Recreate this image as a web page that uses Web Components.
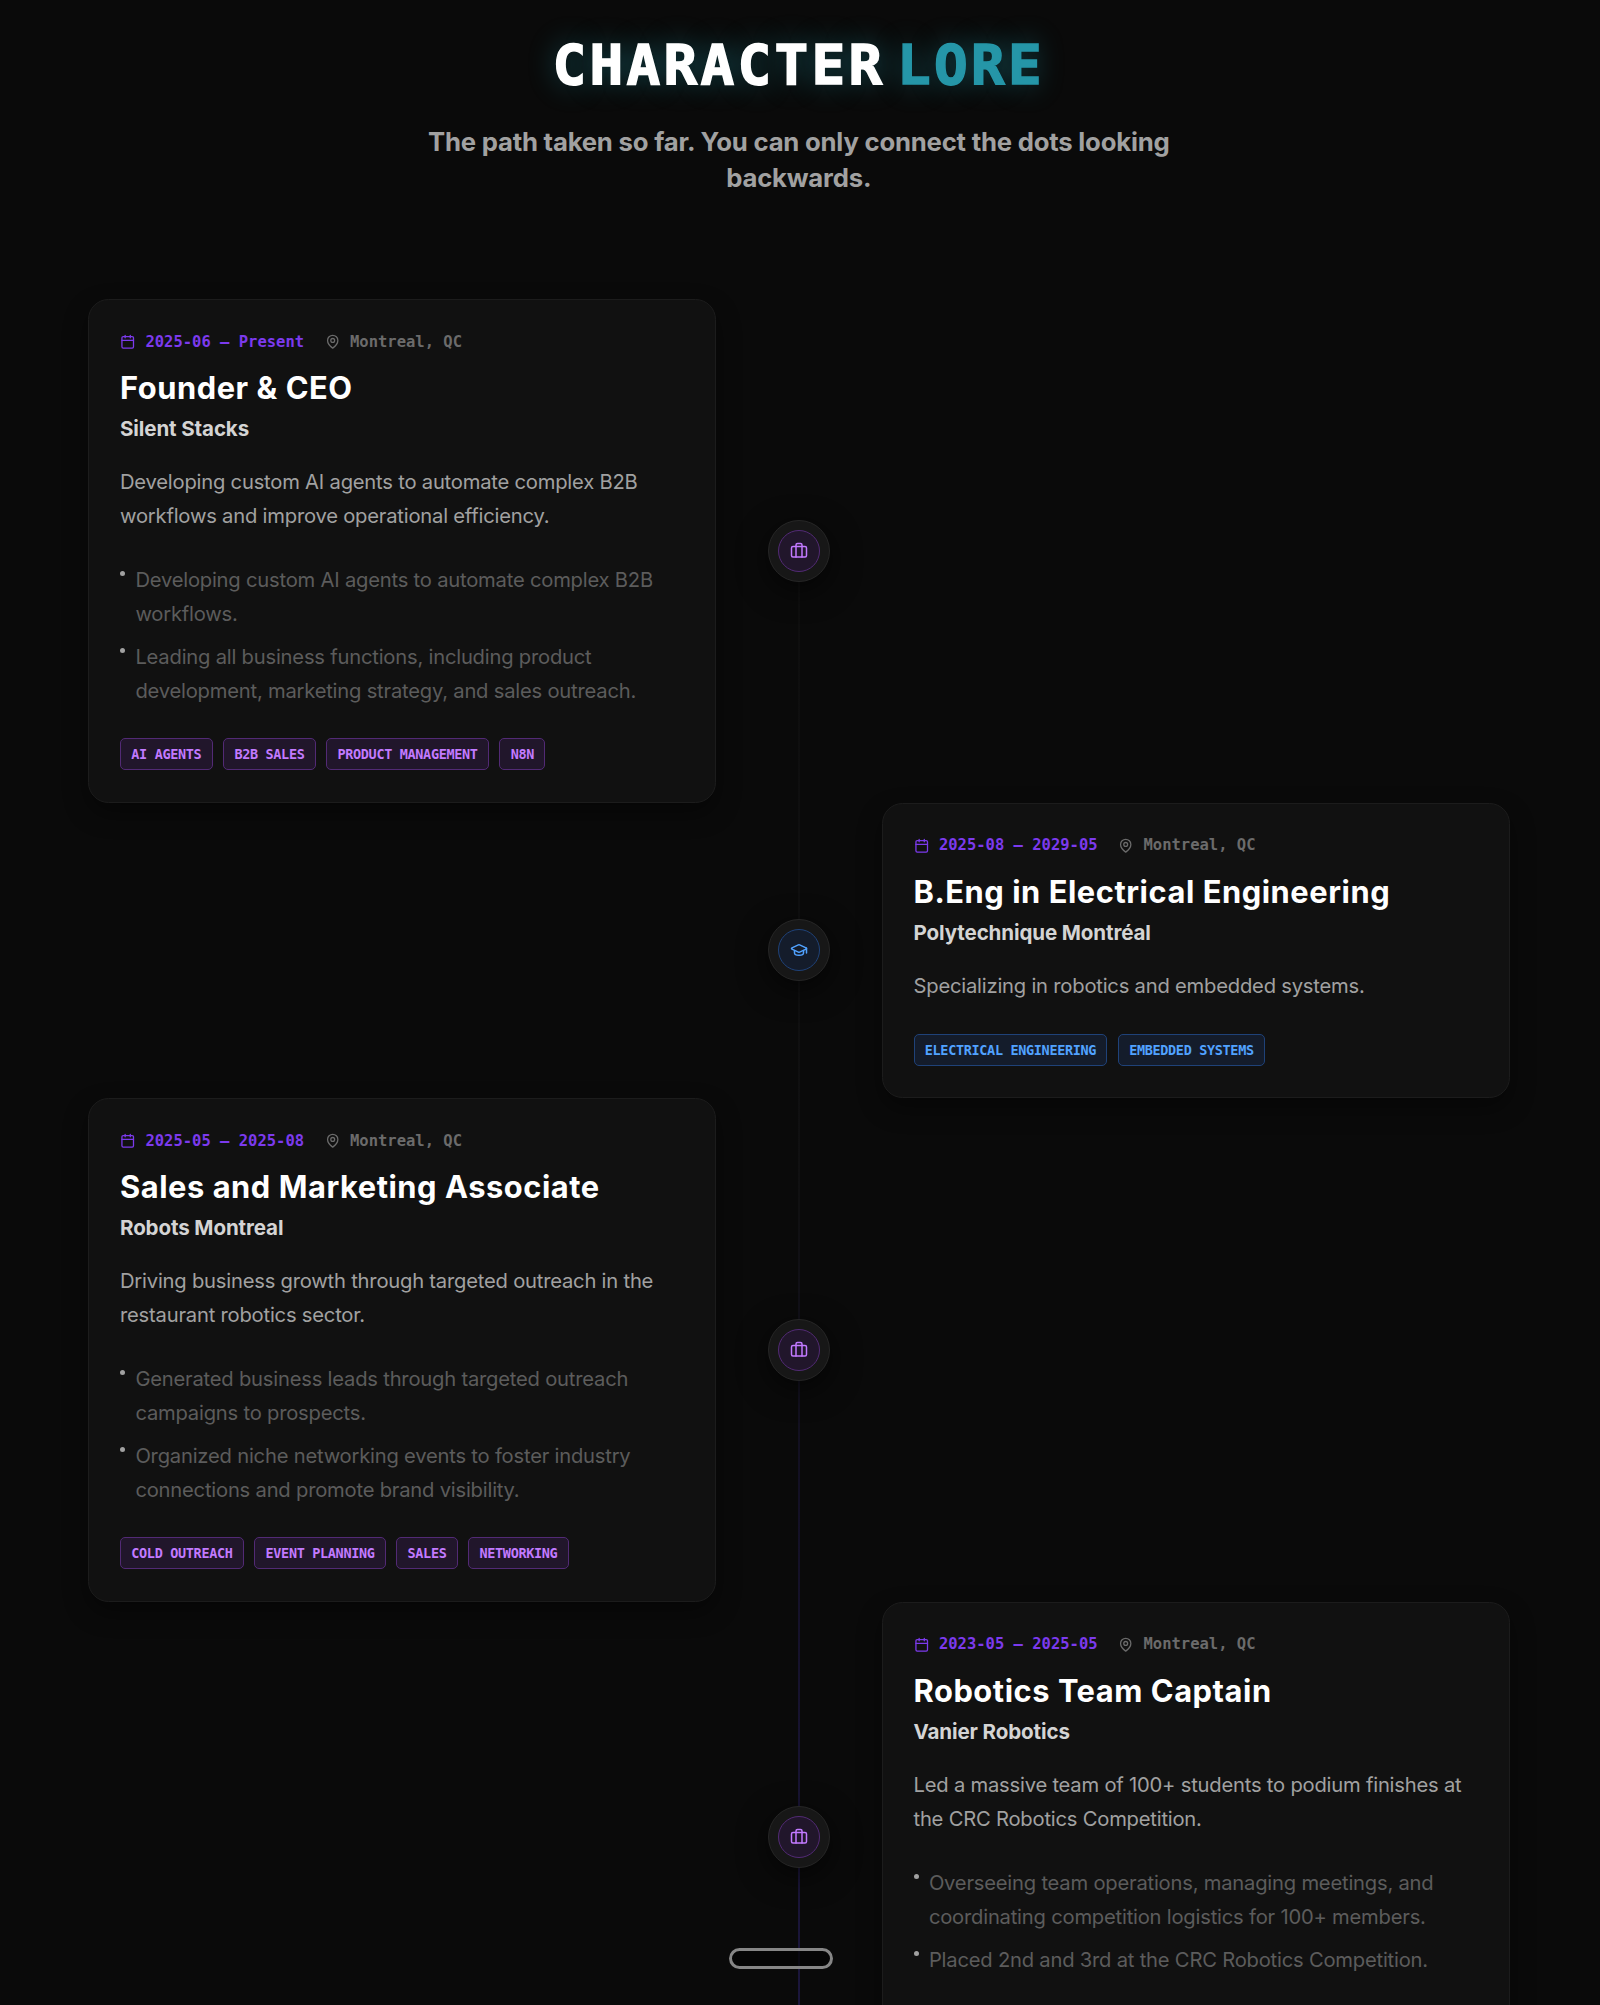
<!DOCTYPE html>
<html lang="en">
<head>
<meta charset="utf-8">
<title>Character Lore</title>
<style>
    html{
        font-size: 20.571px;
        background: #0a0a0a;
    }
    body{
        margin: 0;
        height: 2005px;
        overflow: hidden;
        font-family: Inter, "Liberation Sans", sans-serif;
        color: #fff;
    }
</style>
</head>
<body>
<lore-page>
    <lore-heading slot="head">
        CHARACTER <span slot="accent">LORE</span>
        <span slot="sub">The path taken so far. You can only connect the dots looking backwards.</span>
    </lore-heading>

    <lore-entry kind="work" side="left" dates="2025-06 — Present" place="Montreal, QC" tags="AI Agents|B2B Sales|Product Management|N8N">
        <span slot="title">Founder &amp; CEO</span>
        <span slot="org">Silent Stacks</span>
        Developing custom AI agents to automate complex B2B workflows and improve operational efficiency.
        <lore-point slot="points">Developing custom AI agents to automate complex B2B workflows.</lore-point>
        <lore-point slot="points">Leading all business functions, including product development, marketing strategy, and sales outreach.</lore-point>
    </lore-entry>

    <lore-entry kind="school" side="right" dates="2025-08 — 2029-05" place="Montreal, QC" tags="Electrical Engineering|Embedded Systems">
        <span slot="title">B.Eng in Electrical Engineering</span>
        <span slot="org">Polytechnique Montréal</span>
        Specializing in robotics and embedded systems.
    </lore-entry>

    <lore-entry kind="work" side="left" dates="2025-05 — 2025-08" place="Montreal, QC" tags="Cold Outreach|Event Planning|Sales|Networking">
        <span slot="title">Sales and Marketing Associate</span>
        <span slot="org">Robots Montreal</span>
        Driving business growth through targeted outreach in the restaurant robotics sector.
        <lore-point slot="points">Generated business leads through targeted outreach campaigns to prospects.</lore-point>
        <lore-point slot="points">Organized niche networking events to foster industry connections and promote brand visibility.</lore-point>
    </lore-entry>

    <lore-entry kind="work" side="right" dates="2023-05 — 2025-05" place="Montreal, QC" tags="">
        <span slot="title">Robotics Team Captain</span>
        <span slot="org">Vanier Robotics</span>
        Led a massive team of 100+ students to podium finishes at the CRC Robotics Competition.
        <lore-point slot="points">Overseeing team operations, managing meetings, and coordinating competition logistics for 100+ members.</lore-point>
        <lore-point slot="points">Placed 2nd and 3rd at the CRC Robotics Competition.</lore-point>
    </lore-entry>
</lore-page>
<lore-dock></lore-dock>

<script>
    const ICONS = {
        calendar: '<path d="M8 2v4M16 2v4M3 10h18"/><rect x="3" y="4" width="18" height="18" rx="2"/>',
        pin: '<path d="M20 10c0 6-8 12-8 12s-8-6-8-12a8 8 0 0 1 16 0Z"/><circle cx="12" cy="10" r="3"/>',
        work: '<path d="M16 20V4a2 2 0 0 0-2-2h-4a2 2 0 0 0-2 2v16"/><rect x="2" y="6" width="20" height="14" rx="2"/>',
        school: '<path d="M21.42 10.922a1 1 0 0 0-.019-1.838L12.83 5.18a2 2 0 0 0-1.66 0L2.6 9.08a1 1 0 0 0 0 1.832l8.57 3.908a2 2 0 0 0 1.66 0z"/><path d="M22 10v6M6 12.5V16a6 3 0 0 0 12 0v-3.5"/>'
    }

    class LoreIcon extends HTMLElement {
        constructor(){
            super()
            this.attachShadow({ mode: 'open' })
        }

        connectedCallback(){
            this.shadowRoot.innerHTML = `
                <style>
                    :host{ display: block; width: .75rem; height: .75rem; flex: none; }
                    svg{
                        display: block;
                        width: 100%;
                        height: 100%;
                        fill: none;
                        stroke: currentColor;
                        stroke-width: 2;
                        stroke-linecap: round;
                        stroke-linejoin: round;
                    }
                </style>
                <svg viewBox="0 0 24 24">${ICONS[this.getAttribute('name')]}</svg>`
        }
    }
    customElements.define('lore-icon', LoreIcon)

    class LorePage extends HTMLElement {
        constructor(){
            super()
            this.attachShadow({ mode: 'open' }).innerHTML = `
                <style>
                    :host{
                        display: block;
                        box-sizing: border-box;
                        height: 2005px;
                        overflow: hidden;
                        padding: 40px 90.5px 0 88px;
                    }
                    main{
                        position: relative;
                        margin-top: 103px;
                    }
                    /* the spine lies under the nodes */
                    #spine{
                        position: absolute;
                        left: 710px;
                        top: 252px;
                        width: 2px;
                        height: 1454px;
                        background: linear-gradient(#0e0e0e, #101011 45%, #131024 65%, #1b163c);
                    }
                </style>
                <slot name="head"></slot>
                <main><div id="spine"></div><slot></slot></main>`
        }
    }
    customElements.define('lore-page', LorePage)

    class LoreHeading extends HTMLElement {
        constructor(){
            super()
            this.attachShadow({ mode: 'open' }).innerHTML = `
                <style>
                    :host{ display: block; text-align: center; }
                    h1{
                        margin: 0;
                        height: 84px;
                        font: 700 56px/50px "DejaVu Sans Mono", monospace;
                        letter-spacing: 3.3px;
                        word-spacing: -25.5px;
                        white-space: nowrap;
                        -webkit-text-stroke: 1.5px;
                        text-shadow: 0 0 28px rgba(34, 190, 210, .4);
                    }
                    ::slotted([slot=accent]){ color: #2596a8; }
                    p{
                        margin: 0 auto;
                        max-width: 42rem;
                        font-size: 1.25rem;
                        line-height: 1.75rem;
                        font-weight: 700;
                        letter-spacing: -.21px;
                        color: #a1a1a1;
                    }
                </style>
                <h1><slot></slot><slot name="accent"></slot></h1>
                <p><slot name="sub"></slot></p>`
        }
    }
    customElements.define('lore-heading', LoreHeading)

    class LorePoint extends HTMLElement {
        constructor(){
            super()
            this.attachShadow({ mode: 'open' }).innerHTML = `
                <style>
                    :host{ display: flex; gap: 10.4px; }
                    i{
                        flex: none;
                        width: 5px;
                        height: 5px;
                        margin-top: 8px;
                        border-radius: 50%;
                        background: #a1a1a1;
                    }
                </style>
                <i></i><div><slot></slot></div>`
        }
    }
    customElements.define('lore-point', LorePoint)

    class LoreTag extends HTMLElement {
        constructor(){
            super()
            this.attachShadow({ mode: 'open' }).innerHTML = `
                <style>
                    :host{
                        display: block;
                        padding: 0 10.3px;
                        border: 1px solid var(--edge);
                        border-radius: 5px;
                        background: var(--fill);
                        color: var(--ink);
                        font: 700 13.5px/30px "DejaVu Sans Mono", monospace;
                        letter-spacing: -.34px;
                        text-transform: uppercase;
                    }
                </style>
                <slot></slot>`
        }
    }
    customElements.define('lore-tag', LoreTag)

    class LoreEntry extends HTMLElement {
        constructor(){
            super()
            this.attachShadow({ mode: 'open' })
        }

        connectedCallback(){
            const tags = this.getAttribute('tags').split('|').filter(Boolean)
            this.shadowRoot.innerHTML = `
                <style>
                    :host{
                        --ink: #c27aff;
                        --edge: #522a75;
                        --fill: #21162b;
                        display: grid;
                        grid-template-columns: 628px 62px 628px;
                        justify-content: space-between;
                        align-items: center;
                    }
                    :host([kind=school]){
                        --ink: #51a2ff;
                        --edge: #1f4279;
                        --fill: #141c2b;
                    }
                    article{
                        grid-row: 1;
                        grid-column: 1;
                        box-sizing: border-box;
                        padding: 31.5px 31px;
                        border: 1px solid #1c1c1c;
                        border-radius: 20.5px;
                        background: #111;
                        box-shadow: 0 10px 24px rgba(0, 0, 0, .4);
                    }
                    :host([side=right]) article{ grid-column: 3; }
                    #node{
                        position: relative;
                        grid-row: 1;
                        grid-column: 2;
                        box-sizing: border-box;
                        display: grid;
                        place-items: center;
                        height: 62px;
                        border: 1px solid #262626;
                        border-radius: 50%;
                        background: #171717;
                        box-shadow: 0 8px 30px rgba(0, 0, 0, .6);
                    }
                    #core{
                        box-sizing: border-box;
                        display: grid;
                        place-items: center;
                        width: 42px;
                        height: 42px;
                        border: 1px solid var(--edge);
                        border-radius: 50%;
                        background: var(--fill);
                        color: var(--ink);
                    }
                    #core lore-icon{ width: 18px; height: 18px; }
                    #meta{
                        display: flex;
                        align-items: center;
                        height: 20px;
                        font: 700 15.5px/20px "DejaVu Sans Mono", monospace;
                        color: #6b6b6b;
                    }
                    #meta lore-icon{ margin-right: 10px; }
                    #dates{ margin-right: 20.5px; color: #7c3aed; }
                    #dates, #place{ display: flex; align-items: center; }
                    h3{
                        margin: 15.7px 0 0;
                        font-size: 1.5rem;
                        line-height: 2rem;
                        font-weight: 700;
                        letter-spacing: .54px;
                    }
                    h4{
                        margin: 5px 0 0;
                        font-size: 1rem;
                        line-height: 31px;
                        font-weight: 700;
                        letter-spacing: -.12px;
                        color: #d4d4d4;
                    }
                    p, #points{
                        font-size: 20.2px;
                        line-height: 33.5px;
                        letter-spacing: -.21px;
                    }
                    p{
                        margin: 20.8px 0 0;
                        color: #a1a1a1;
                    }
                    #points{
                        display: grid;
                        gap: 10.3px;
                        margin-top: 31px;
                        color: #5c5c5c;
                    }
                    #points[hidden]{ display: none; }
                    #tags{
                        display: flex;
                        gap: 10.4px;
                        min-height: 32px;
                        margin-top: 31px;
                    }
                </style>
                <article>
                    <div id="meta">
                        <div id="dates"><lore-icon name="calendar"></lore-icon><span>${this.getAttribute('dates')}</span></div>
                        <div id="place"><lore-icon name="pin"></lore-icon><span>${this.getAttribute('place')}</span></div>
                    </div>
                    <h3><slot name="title"></slot></h3>
                    <h4><slot name="org"></slot></h4>
                    <p><slot></slot></p>
                    <div id="points" ${this.querySelector('lore-point') ? '' : 'hidden'}><slot name="points"></slot></div>
                    <div id="tags">${tags.map(t => `<lore-tag>${t}</lore-tag>`).join('')}</div>
                </article>
                <div id="node"><div id="core"><lore-icon name="${this.getAttribute('kind')}"></lore-icon></div></div>`
        }
    }
    customElements.define('lore-entry', LoreEntry)

    // floating pill over the bottom edge of the page
    class LoreDock extends HTMLElement {
        constructor(){
            super()
            this.attachShadow({ mode: 'open' }).innerHTML = `
                <style>
                    :host{
                        position: fixed;
                        left: 729px;
                        top: 1948px;
                        box-sizing: border-box;
                        width: 104px;
                        height: 21px;
                        border: 3px solid #868686;
                        border-radius: 11px;
                        background: rgba(4, 4, 4, .75);
                    }
                </style>`
        }
    }
    customElements.define('lore-dock', LoreDock)
</script>
</body>
</html>
